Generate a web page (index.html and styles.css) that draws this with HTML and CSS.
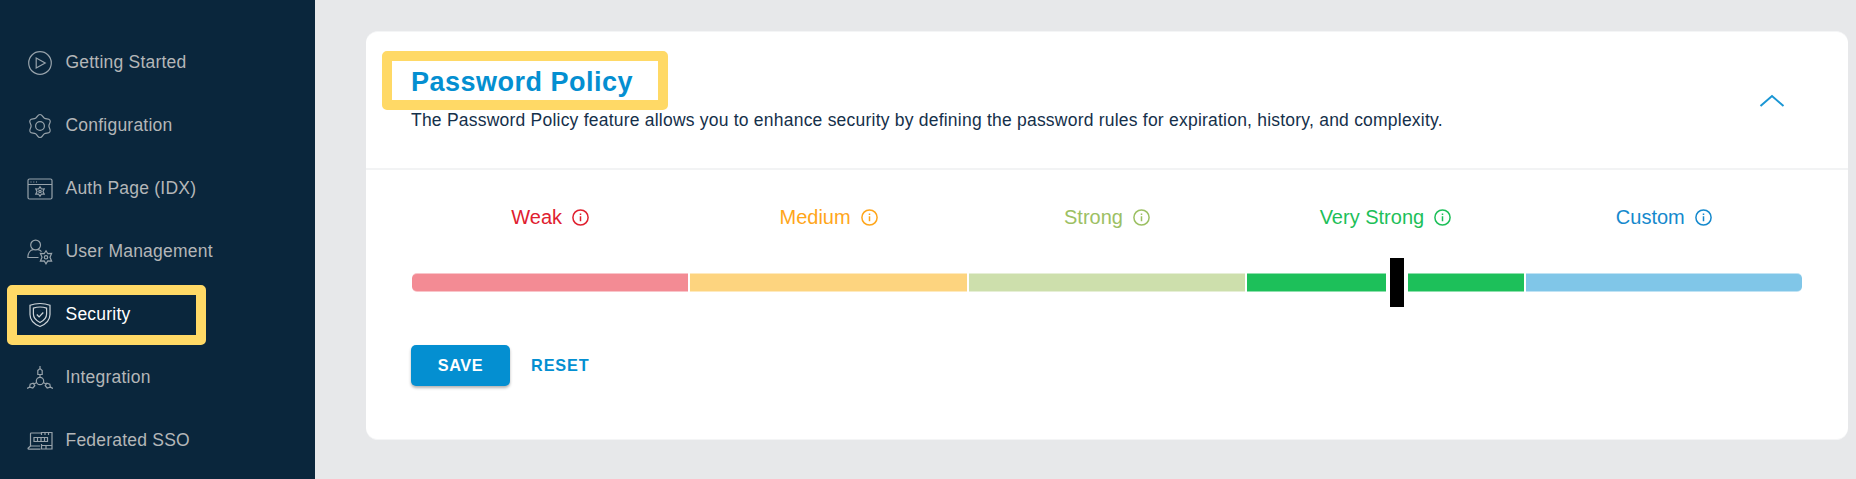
FILE: index.html
```html
<!DOCTYPE html>
<html lang="en">
<head>
<meta charset="utf-8">
<title>Password Policy</title>
<link rel="stylesheet" href="styles.css">
</head>
<body>
<svg class="defs" width="0" height="0" aria-hidden="true">
  <symbol id="info" viewBox="0 0 17 17">
    <circle cx="8.5" cy="8.5" r="7.6" fill="none" stroke="currentColor" stroke-width="1.5"/>
    <path d="M8.5 7.3v5M8.5 4.4v1.6" fill="none" stroke="currentColor" stroke-width="1.5"/>
  </symbol>
</svg>
<div class="app">
  <nav class="sidebar">
    <a class="item">
      <svg class="icon" viewBox="0 0 26 26"><circle cx="13" cy="13" r="11.3"/><path d="M9.2 8l9 5-9 5z"/></svg>
      <span>Getting Started</span>
    </a>
    <a class="item">
      <svg class="icon" viewBox="0 0 26 26"><path d="M13 1.500C15.500 1.500 15.500 4.200 17.450 5.300C19.400 6.400 21.700 5.100 22.960 7.250C24.200 9.400 21.900 10.800 21.900 13C21.900 15.200 24.200 16.600 22.960 18.750C21.700 20.900 19.400 19.600 17.450 20.700C15.500 21.800 15.500 24.500 13 24.500C10.500 24.500 10.500 21.800 8.550 20.700C6.600 19.600 4.300 20.900 3.040 18.750C1.800 16.600 4.100 15.200 4.100 13C4.100 10.800 1.800 9.400 3.040 7.250C4.300 5.100 6.600 6.400 8.550 5.300C10.500 4.200 10.500 1.500 13 1.500z"/><circle cx="13" cy="13" r="4.400"/></svg>
      <span>Configuration</span>
    </a>
    <a class="item">
      <svg class="icon" viewBox="0 0 26 26"><rect x="1" y="3" width="24" height="20" rx="1.500"/><path d="M1 8.500h24M3.500 6h1M6.300 6h1M9 6h1"/><path d="M13 10.800l1.500 2.200 2.700-.1-1.200 2.600 1.200 2.600-2.700-.1L13 20.200 11.500 18l-2.700.1 1.200-2.600-1.200-2.600 2.700.1z"/><circle cx="13" cy="15.500" r="1.200"/></svg>
      <span>Auth Page (IDX)</span>
    </a>
    <a class="item">
      <svg class="icon" viewBox="0 0 26 26"><circle cx="8.600" cy="6" r="4.900"/><path d="M11.500 18.500H.9c0-4.500 2.300-7.600 5.400-7.900M11 10.600c1.500.2 2.700 1 3.500 2"/><path d="M19 11.800l1.800 2.900 3.800-.3-1.600 3.900 1.600 3.900-3.800-.3-1.800 2.900-1.800-2.900-3.800.3 1.600-3.900-1.600-3.900 3.800.3z"/><circle cx="19" cy="18.300" r="1.700"/></svg>
      <span>User Management</span>
    </a>
    <a class="item active">
      <svg class="icon" viewBox="0 0 26 26"><path d="M13 1.500c3.500 0 7 .6 10 1.700v9.300c0 5.500-4.500 9.800-10 12-5.500-2.200-10-6.500-10-12V3.200c3-1.100 6.500-1.700 10-1.700z"/><path d="M13 5c2.300 0 4.600.4 6.600 1.100v6c0 3.700-2.700 6.500-6.600 8.400-3.900-1.900-6.600-4.700-6.600-8.400v-6C8.400 5.400 10.700 5 13 5z"/><path d="M9.800 12.500l2.300 2.300 4.200-4.300"/></svg>
      <span>Security</span>
    </a>
    <a class="item">
      <svg class="icon" viewBox="0 0 26 26"><circle cx="13" cy="16" r="3.700"/><path d="M13 1v3M10.800 5.500 13 3.500l2.200 2v4h-4.400zM13 9.500v2.800M0 23.500l2.600-1.400M2.600 22.100l.6-3 3-1 1.600 2.600-2 2.300zM7 19l2.700-1.500M26 23.500l-2.600-1.400M23.400 22.100l-.6-3-3-1-1.600 2.600 2 2.300zM19 19l-2.700-1.500"/></svg>
      <span>Integration</span>
    </a>
    <a class="item">
      <svg class="icon" viewBox="0 0 26 26"><path d="M3.500 18V5.800q0-.8.8-.8H14M3.500 18H13M3.500 18 1 20.200q0 1 1 1h11.500"/><path d="M14.500 7V4.500H25v16.500H14.500V16M14.500 17.500H25M19 17.500V21M18 4.500V7M21.500 4.500V7"/><path d="M7 9.500h13.500v4H7zM10.500 9.500v4M14 9.500v4M17.500 9.500v4"/></svg>
      <span>Federated SSO</span>
    </a>
    <div class="marker marker-security"></div>
  </nav>
  <main class="main">
    <section class="card">
      <header class="head">
        <div class="head-text">
          <h1 class="title">Password Policy</h1>
          <p class="desc">The Password Policy feature allows you to enhance security by defining the password rules for expiration, history, and complexity.</p>
        </div>
        <svg class="chevron" viewBox="0 0 26 14"><path d="M1.500 12 13 2l11.500 10"/></svg>
        <div class="marker marker-title"></div>
      </header>
      <div class="body">
        <div class="levels">
          <div class="level weak"><div class="label"><span>Weak</span><svg class="info"><use href="#info"/></svg></div><div class="bar"></div></div>
          <div class="level medium"><div class="label"><span>Medium</span><svg class="info"><use href="#info"/></svg></div><div class="bar"></div></div>
          <div class="level strong"><div class="label"><span>Strong</span><svg class="info"><use href="#info"/></svg></div><div class="bar"></div></div>
          <div class="level very"><div class="label"><span>Very Strong</span><svg class="info"><use href="#info"/></svg></div><div class="bar"><div class="handle"></div></div></div>
          <div class="level custom"><div class="label"><span>Custom</span><svg class="info"><use href="#info"/></svg></div><div class="bar"></div></div>
        </div>
        <div class="actions">
          <button class="btn save">SAVE</button>
          <button class="btn reset">RESET</button>
        </div>
      </div>
    </section>
  </main>
</div>
</body>
</html>
```
FILE: styles.css
```css
* { box-sizing: border-box; }
body {
  margin: 0;
  font-family: "Liberation Sans", Arial, sans-serif;
  background: #e7e8ea;
}
.defs { display: block; height: 0; }
.app { display: flex; height: 479px; overflow: hidden; }

.sidebar {
  position: relative;
  flex: 0 0 315px;
  padding-top: 31px;
  background: #0a263c;
}
.item {
  display: flex;
  align-items: center;
  gap: 12.5px;
  height: 63px;
  padding-left: 27px;
  color: #b4b6b8;
  font-size: 17.5px;
  letter-spacing: 0.22px;
}
.item.active { color: #fff; }
.icon {
  width: 26px;
  height: 26px;
  fill: none;
  stroke: #98a3ab;
  stroke-width: 1.2;
}
.active .icon { stroke: #ccd3d8; }

.marker {
  position: absolute;
  border: 10px solid #ffd966;
  border-radius: 5px;
}
.marker-security { left: 7px; top: 285px; width: 199px; height: 60px; }
.marker-title { left: 16px; top: 20px; width: 286px; height: 59px; }

.main { flex: 1; padding: 31px 8px 40px 51px; }
.card {
  height: 409px;
  border: solid #f4f5f6;
  border-width: 1px 0;
  border-radius: 12px;
  background: #fff;
}
.head {
  position: relative;
  display: flex;
  align-items: flex-start;
  justify-content: space-between;
  height: 138px;
  padding: 34px 63px 0 45px;
  border-bottom: 2px solid #f2f3f4;
}
.title {
  margin: 0;
  color: #048fd1;
  font-size: 27px;
  line-height: 32px;
  letter-spacing: 0.5px;
}
.desc {
  margin: 10px 0 0;
  color: #15304a;
  font-size: 17.5px;
  line-height: 24px;
  letter-spacing: 0.22px;
  white-space: nowrap;
}
.chevron {
  width: 26px;
  height: 14px;
  margin-top: 28px;
  fill: none;
  stroke: #1a96d4;
  stroke-width: 2;
}
.marker-title { top: 19px; }

.body { padding: 36px 46px 0; }
.levels { display: grid; grid-template-columns: repeat(5, 1fr); gap: 2px; }
.label {
  display: flex;
  align-items: center;
  justify-content: center;
  gap: 10px;
  height: 22px;
  font-size: 20px;
}
.info { width: 17px; height: 17px; }
.bar {
  position: relative;
  height: 19px;
  margin-top: 45px;
  border: solid #ffffff80;
  border-width: 1px 0;
  background: var(--bar);
}
.weak { color: #e0202f; --bar: #f38b94; }
.medium { color: #ffa61a; --bar: #fdd47f; }
.strong { color: #9cc063; --bar: #cddfac; }
.very { color: #1dbf59; --bar: #1dc05a; }
.custom { color: #1589cd; --bar: #80c6e8; }
.weak .bar { border-radius: 5px 0 0 5px; }
.custom .bar { border-radius: 0 5px 5px 0; }
.handle {
  position: absolute;
  left: 139px;
  top: -16px;
  width: 22px;
  height: 49px;
  border: solid #fff;
  border-width: 0 4px;
  background: #000;
}

.actions { display: flex; align-items: center; margin: 53px 0 0 -1px; }
.btn {
  height: 41px;
  padding: 0 0 1px;
  border: 0;
  border-radius: 5px;
  background: none;
  color: #048fd1;
  font: bold 16.25px "Liberation Sans", Arial, sans-serif;
  letter-spacing: 0.9px;
}
.save {
  width: 99px;
  background: #048fd1;
  color: #fff;
  letter-spacing: 0.6px;
  box-shadow: 0 2px 3px #0000004d;
}
.reset { margin-left: 21px; }
```
